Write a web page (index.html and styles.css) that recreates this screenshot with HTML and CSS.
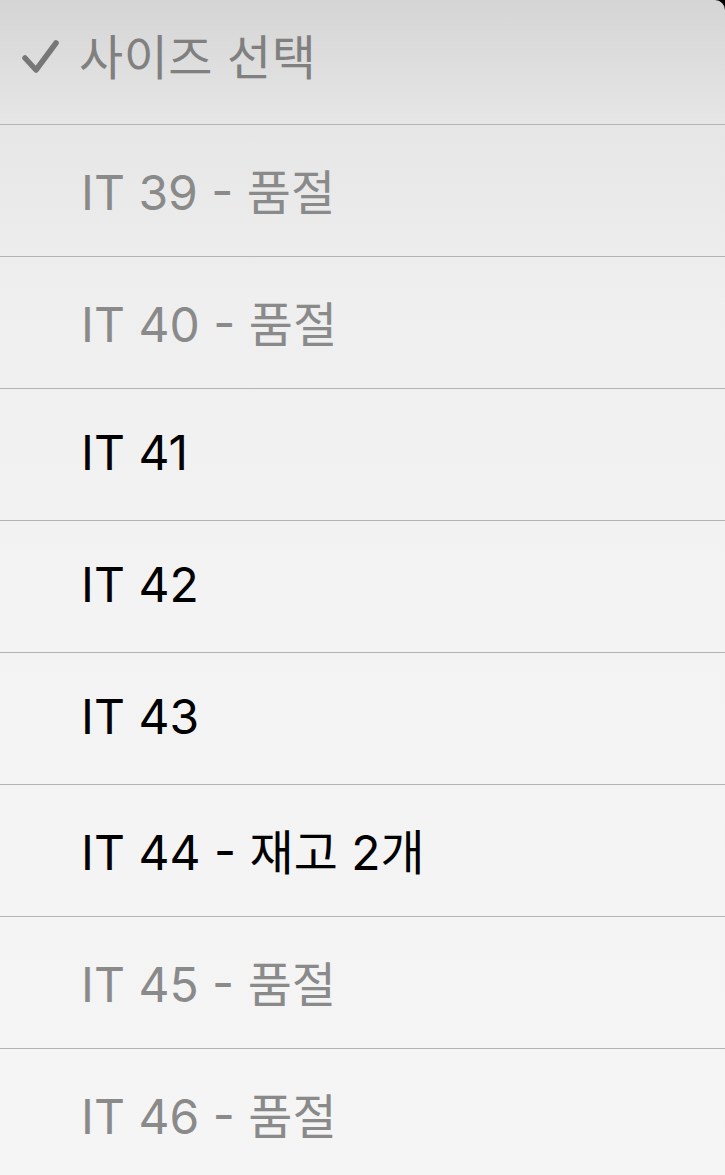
FILE: index.html
```html
<!DOCTYPE html>
<html lang="ko">
<head>
    <meta charset="UTF-8">
    <meta name="viewport" content="width=device-width, initial-scale=1.0">
    <link rel="stylesheet" href="styles.css">
</head>
<body>
    <div class="picker-sheet">
        <div class="picker-title">
            <svg class="check-icon" viewBox="0 0 40 36" width="40" height="36">
                <path d="M4 19 L15 31 L35 4" fill="none" stroke="#777" stroke-width="5.5" stroke-linecap="round" stroke-linejoin="round"/>
            </svg>
            <span>사이즈 선택</span>
        </div>
        <ul class="size-list">
            <li class="size-item sold-out">IT 39 - 품절</li>
            <li class="size-item sold-out">IT 40 - 품절</li>
            <li class="size-item">IT 41</li>
            <li class="size-item">IT 42</li>
            <li class="size-item">IT 43</li>
            <li class="size-item">IT 44 - 재고 2개</li>
            <li class="size-item sold-out">IT 45 - 품절</li>
            <li class="size-item sold-out">IT 46 - 품절</li>
        </ul>
    </div>
</body>
</html>
```

FILE: styles.css
```css
* {
    margin: 0;
    padding: 0;
    box-sizing: border-box;
}

html, body {
    height: 100%;
    overflow: hidden;
}

body {
    background: #000;
    font-family: Inter, 'Noto Sans CJK KR', sans-serif;
}

/* 선택 시트 */
.picker-sheet {
    background: linear-gradient(to bottom, #d5d5d5 0px, #e6e6e6 124px, #efefef 300px, #f3f3f3 600px, #f5f5f5 100%);
    border-top-right-radius: 10px;
    min-height: 100%;
}

.picker-title {
    display: flex;
    align-items: center;
    gap: 18px;
    height: 124px;
    padding: 0 0 16px 21px;
    color: #808080;
    font-size: 48px;
    letter-spacing: 0.5px;
}

.check-icon {
    flex-shrink: 0;
    margin-top: 6px;
}

.size-list {
    list-style: none;
}

.size-item {
    display: flex;
    align-items: center;
    height: 132px;
    padding: 0 0 4px 81px;
    border-top: 1px solid #b3b3b3;
    font-size: 48px;
    color: #000;
}

/* 품절 사이즈 */
.size-item.sold-out {
    color: #8a8a8a;
}
```
